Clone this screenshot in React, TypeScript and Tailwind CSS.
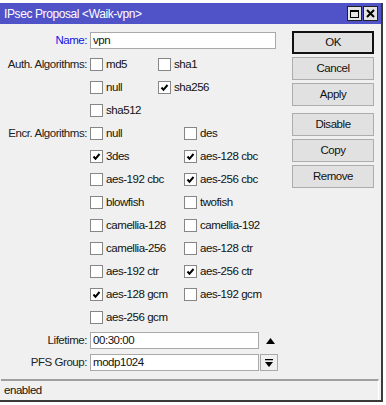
import React from 'react';

type Opt = { label: string; checked?: boolean };

const authAlgs: Opt[][] = [
  [{ label: 'md5' }, { label: 'sha1' }],
  [{ label: 'null' }, { label: 'sha256', checked: true }],
  [{ label: 'sha512' }],
];

const encrAlgs: Opt[][] = [
  [{ label: 'null' }, { label: 'des' }],
  [{ label: '3des', checked: true }, { label: 'aes-128 cbc', checked: true }],
  [{ label: 'aes-192 cbc' }, { label: 'aes-256 cbc', checked: true }],
  [{ label: 'blowfish' }, { label: 'twofish' }],
  [{ label: 'camellia-128' }, { label: 'camellia-192' }],
  [{ label: 'camellia-256' }, { label: 'aes-128 ctr' }],
  [{ label: 'aes-192 ctr' }, { label: 'aes-256 ctr', checked: true }],
  [{ label: 'aes-128 gcm', checked: true }, { label: 'aes-192 gcm' }],
  [{ label: 'aes-256 gcm' }],
];

const CheckBox: React.FC<{ opt: Opt }> = ({ opt }) => (
  <div className="flex items-center">
    <div className="w-[13px] h-[13px] bg-white border border-[#868686] flex items-center justify-center">
      {opt.checked && (
        <svg width="11" height="11" viewBox="0 0 11 11">
          <path d="M2.5 5.5 L4.5 7.8 L8.5 3" stroke="#000" strokeWidth="2" fill="none" />
        </svg>
      )}
    </div>
    <span className="ml-[3px] text-[#111]">{opt.label}</span>
  </div>
);

const Label: React.FC<{ text: string; blue?: boolean }> = ({ text, blue }) => (
  <div className={`w-[90px] shrink-0 pr-[3px] text-right ${blue ? 'text-[#1010e8]' : 'text-[#222]'}`}>{text}</div>
);

const CheckGroup: React.FC<{ label: string; rows: Opt[][]; colW: string }> = ({ label, rows, colW }) => (
  <>
    {rows.map((row, i) => (
      <div key={i} className="h-[23px] flex items-center">
        <Label text={i === 0 ? label : ''} />
        <div className={`${colW} shrink-0`}>{row[0] && <CheckBox opt={row[0]} />}</div>
        <div>{row[1] && <CheckBox opt={row[1]} />}</div>
      </div>
    ))}
  </>
);

const Btn: React.FC<{ text: string; primary?: boolean; className?: string }> = ({ text, primary, className }) => (
  <button
    className={`w-[82px] h-[23px] bg-[#e1e1e1] text-[#111] flex items-center justify-center ${
      primary ? 'border-2 border-[#111]' : 'border border-[#adadad]'
    } ${className ?? ''}`}
  >
    {text}
  </button>
);

export default function App() {
  return (
    <div
      className="w-[386px] h-[405px] bg-white overflow-hidden text-[11.5px] tracking-[-0.45px] leading-none"
      style={{ fontFamily: '"Liberation Sans", Arial, sans-serif' }}
    >
      <div className="mt-[3px] w-[383px] h-[399px] bg-[#f0f0f0] border-r-2 border-b-2 border-[#3a3a3a] flex flex-col">
        {/* Title bar */}
        <div className="h-[21px] shrink-0 bg-[#5052c8] flex items-center justify-between pl-[4px] pr-[3px]">
          <span className="text-white text-[12px] tracking-[-0.4px]">IPsec Proposal &lt;Waik-vpn&gt;</span>
          <div className="flex gap-[1px]">
            <div className="w-[15px] h-[15px] bg-[#e4e4e4] border border-[#222] flex items-center justify-center">
              <div className="w-[9px] h-[8px] border border-black border-t-2" />
            </div>
            <div className="w-[15px] h-[15px] bg-[#e4e4e4] border border-[#222] flex items-center justify-center">
              <svg width="9" height="9" viewBox="0 0 9 9">
                <path d="M1 1 L8 8 M8 1 L1 8" stroke="#000" strokeWidth="2" />
              </svg>
            </div>
          </div>
        </div>

        {/* Body */}
        <div className="flex-1 flex">
          <div className="w-[292px] shrink-0 pt-[8px]">
            <div className="h-[17px] flex items-center">
              <Label text="Name:" blue />
              <div className="w-[186px] h-[17px] bg-white border border-[#a9a9a9] flex items-center pl-[2px] text-[#111]">vpn</div>
            </div>
            <div className="mt-[4px]">
              <CheckGroup label="Auth. Algorithms:" rows={authAlgs} colW="w-[68px]" />
              <CheckGroup label="Encr. Algorithms:" rows={encrAlgs} colW="w-[94px]" />
            </div>
            <div className="mt-[3px] h-[17px] flex items-center">
              <Label text="Lifetime:" />
              <div className="w-[169px] h-[17px] bg-white border border-[#a9a9a9] flex items-center pl-[2px] text-[#111]">00:30:00</div>
              <svg className="ml-[7px]" width="9" height="6" viewBox="0 0 9 6">
                <path d="M0 6 L4.5 0 L9 6 Z" fill="#000" />
              </svg>
            </div>
            <div className="mt-[5px] h-[17px] flex items-center">
              <Label text="PFS Group:" />
              <div className="w-[169px] h-[17px] bg-white border border-[#a9a9a9] flex items-center pl-[2px] text-[#111]">modp1024</div>
              <div className="ml-px w-[18px] h-[17px] bg-[#f0f0f0] border border-[#a9a9a9] flex items-center justify-center">
                <svg width="8" height="8" viewBox="0 0 8 8">
                  <path d="M0 0.5 H8" stroke="#000" strokeWidth="1.5" />
                  <path d="M0 3 L4 8 L8 3 Z" fill="#000" />
                </svg>
              </div>
            </div>
          </div>

          <div className="pt-[7px] flex flex-col gap-[3px]">
            <Btn text="OK" primary />
            <Btn text="Cancel" />
            <Btn text="Apply" />
            <Btn text="Disable" className="mt-[4px]" />
            <Btn text="Copy" />
            <Btn text="Remove" />
          </div>
        </div>

        {/* Status bar */}
        <div className="h-[21px] shrink-0 ml-px mr-[2px] border-t-2 border-[#a0a0a0] border-r border-r-[#ffffff] flex items-center pl-[3px] text-[#111]">
          enabled
        </div>
      </div>
    </div>
  );
}
